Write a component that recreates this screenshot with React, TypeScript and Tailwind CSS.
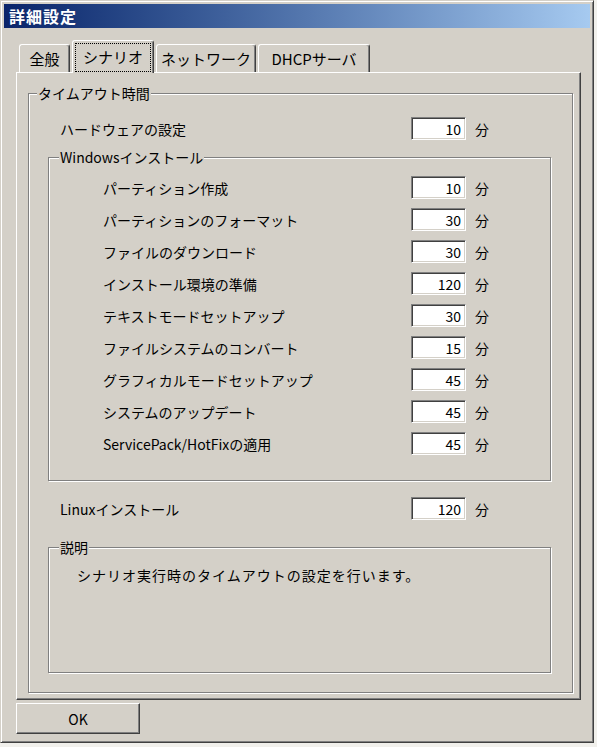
import React from "react";

const windowsRows: [string, string][] = [
  ["パーティション作成", "10"],
  ["パーティションのフォーマット", "30"],
  ["ファイルのダウンロード", "30"],
  ["インストール環境の準備", "120"],
  ["テキストモードセットアップ", "30"],
  ["ファイルシステムのコンバート", "15"],
  ["グラフィカルモードセットアップ", "45"],
  ["システムのアップデート", "45"],
  ["ServicePack/HotFixの適用", "45"],
];

function NumBox({ value }: { value: string }) {
  return (
    <div className="w-[55px] h-[23px] bg-white border border-t-[#808080] border-l-[#808080] border-r-white border-b-white shadow-[inset_1px_1px_0_#404040,inset_-1px_-1px_0_#d4d0c8] flex items-center justify-end pr-[4px] text-[14px] leading-none">
      {value}
    </div>
  );
}

function Row({ label, value, labelWidth, pl }: { label: string; value: string; labelWidth: string; pl: string }) {
  return (
    <div className="flex items-center h-[23px]">
      <div className={`${labelWidth} ${pl} leading-none whitespace-nowrap`}>{label}</div>
      <NumBox value={value} />
      <div className="ml-[9px] leading-none">分</div>
    </div>
  );
}

function Tab({ label, w, selected }: { label: string; w: string; selected?: boolean }) {
  if (selected) {
    return (
      <div className={`relative z-10 ${w} h-[33px] -mb-[1px] bg-[#d4d0c8] border-l border-t border-l-white border-t-white border-r border-r-[#404040] shadow-[inset_-1px_0_0_#808080] rounded-tl-[3px] rounded-tr-[3px] flex items-center justify-center pb-[2px]`}>
        <div className="absolute left-[2px] right-[2px] top-[2px] bottom-[1px] border border-dotted border-black" />
        <span className="leading-none">{label}</span>
      </div>
    );
  }
  return (
    <div className={`${w} h-[28px] bg-[#d4d0c8] border-l border-t border-l-white border-t-white border-r border-r-[#404040] shadow-[inset_-1px_0_0_#808080] rounded-tl-[3px] rounded-tr-[3px] flex items-center justify-center`}>
      <span className="leading-none">{label}</span>
    </div>
  );
}

export default function App() {
  return (
    <div className="w-[597px] h-[747px] bg-[#f1f0ec] font-['Noto_Sans_CJK_JP',sans-serif] text-[14px] text-black">
      <div className="w-[594px] h-[743px] bg-[#d4d0c8] border border-t-[#d4d0c8] border-l-[#d4d0c8] border-r-[#404040] border-b-[#404040] shadow-[inset_1px_1px_0_#fff,inset_-1px_-1px_0_#808080] p-[3px] flex flex-col">
        {/* title bar */}
        <div className="h-[24px] bg-gradient-to-r from-[#0a246a] to-[#a6caf0] flex items-center pl-[5px]">
          <span className="text-white font-bold text-[16px] leading-none tracking-[1px]">詳細設定</span>
        </div>

        <div className="pl-[12px] mt-[12px] flex flex-col">
          {/* tabs */}
          <div className="flex items-end gap-[2px] pl-[3px] h-[32px] text-[15px]">
            <Tab label="全般" w="w-[51px]" />
            <Tab label="シナリオ" w="w-[82px]" selected />
            <Tab label="ネットワーク" w="w-[100px]" />
            <Tab label="DHCPサーバ" w="w-[112px]" />
          </div>

          {/* panel */}
          <div className="w-[565px] border-l border-t border-l-white border-t-white border-r border-b border-r-[#404040] border-b-[#404040] shadow-[inset_-1px_-1px_0_#808080] pt-[20px] pl-[11px] pr-[7px] pb-[6px]">
            {/* timeout group */}
            <div className="relative border border-[#808080] shadow-[inset_1px_1px_0_#fff,1px_1px_0_#fff] pt-[23px] pl-[19px] pr-[21px] pb-[19px]">
              <span className="absolute left-[8px] -top-[9px] bg-[#d4d0c8] px-[1px] leading-[16px]">タイムアウト時間</span>

              <Row label="ハードウェアの設定" value="10" labelWidth="w-[363px]" pl="pl-[12px]" />

              {/* windows group */}
              <div className="relative mt-[17px] border border-[#808080] shadow-[inset_1px_1px_0_#fff,1px_1px_0_#fff] pt-[18px] pb-[25px] flex flex-col gap-[9px]">
                <span className="absolute left-[10px] -top-[9px] bg-[#d4d0c8] px-[1px] leading-[16px]">Windowsインストール</span>
                {windowsRows.map(([l, v]) => (
                  <Row key={l} label={l} value={v} labelWidth="w-[362px]" pl="pl-[54px]" />
                ))}
              </div>

              <div className="mt-[16px]">
                <Row label="Linuxインストール" value="120" labelWidth="w-[363px]" pl="pl-[12px]" />
              </div>

              {/* description */}
              <div className="relative mt-[27px] h-[126px] border border-[#808080] shadow-[inset_1px_1px_0_#fff,1px_1px_0_#fff] pt-[19px] pl-[28px]">
                <span className="absolute left-[10px] -top-[9px] bg-[#d4d0c8] px-[1px] leading-[16px]">説明</span>
                <div className="leading-[16px] tracking-[1px]">シナリオ実行時のタイムアウトの設定を行います。</div>
              </div>
            </div>
          </div>

          {/* OK button */}
          <div className="mt-[3px] w-[124px] h-[31px] border border-t-white border-l-white border-r-[#404040] border-b-[#404040] shadow-[inset_-1px_-1px_0_#808080] flex items-center justify-center">
            <span className="leading-none">OK</span>
          </div>
        </div>
      </div>
    </div>
  );
}
